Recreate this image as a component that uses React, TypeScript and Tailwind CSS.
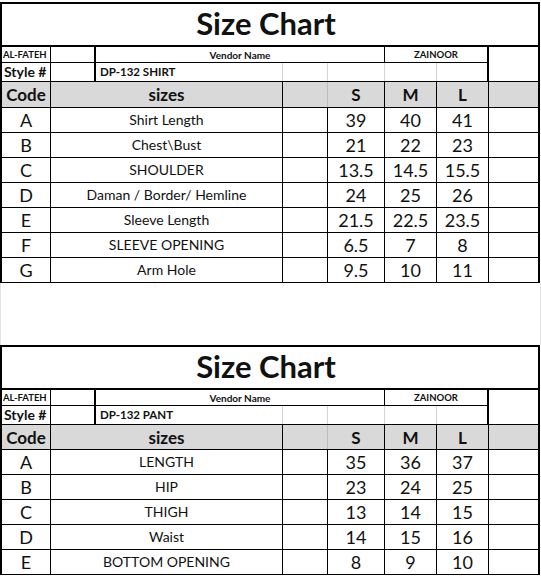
import React from "react";

type Row = { code: string; label: string; s: string; m: string; l: string };

const shirt: Row[] = [
  { code: "A", label: "Shirt Length", s: "39", m: "40", l: "41" },
  { code: "B", label: "Chest\\Bust", s: "21", m: "22", l: "23" },
  { code: "C", label: "SHOULDER", s: "13.5", m: "14.5", l: "15.5" },
  { code: "D", label: "Daman / Border/ Hemline", s: "24", m: "25", l: "26" },
  { code: "E", label: "Sleeve Length", s: "21.5", m: "22.5", l: "23.5" },
  { code: "F", label: "SLEEVE OPENING", s: "6.5", m: "7", l: "8" },
  { code: "G", label: "Arm Hole", s: "9.5", m: "10", l: "11" },
];

const pant: Row[] = [
  { code: "A", label: "LENGTH", s: "35", m: "36", l: "37" },
  { code: "B", label: "HIP", s: "23", m: "24", l: "25" },
  { code: "C", label: "THIGH", s: "13", m: "14", l: "15" },
  { code: "D", label: "Waist", s: "14", m: "15", l: "16" },
  { code: "E", label: "BOTTOM OPENING", s: "8", m: "9", l: "10" },
];

function Chart({ styleName, rows, headerTall }: { styleName: string; rows: Row[]; headerTall: boolean }) {
  return (
    <div className="w-[540px] border-x-2 border-black text-[#111]">
      <div className="h-[45px] border-y-2 border-black flex items-center justify-center text-[31px] font-bold leading-none pb-[2px] pr-[8px]">
        Size Chart
      </div>
      <div className="flex border-b border-black">
        <div className="flex flex-col">
          <div className="flex h-[16px] border-b border-black">
            <div className="w-[49px] border-r border-black flex items-center pl-[1px] text-[9.5px] font-bold leading-none">
              AL-FATEH
            </div>
            <div className="w-[45px] border-r-2 border-black" />
            <div className="w-[289px] border-r border-black flex items-center justify-center text-[10px] font-bold leading-none">
              Vendor Name
            </div>
            <div className="w-[104px] border-r-2 border-black flex items-center justify-center text-[9.5px] font-bold leading-none">
              ZAINOOR
            </div>
          </div>
          <div className="flex h-[18px]">
            <div className="w-[49px] border-r border-black flex items-center pl-[2px] text-[14px] font-bold leading-none">
              Style #
            </div>
            <div className="w-[45px] border-r-2 border-black" />
            <div className="w-[187px] border-r border-[#d4d4d4] flex items-center pl-[4px] text-[11.5px] font-bold leading-none whitespace-nowrap">
              {styleName}
            </div>
            <div className="w-[45px] border-r border-[#d4d4d4]" />
            <div className="w-[57px] border-r border-[#d4d4d4]" />
            <div className="w-[52px] border-r border-[#d4d4d4]" />
            <div className="w-[52px] border-r-2 border-black" />
          </div>
        </div>
        <div className="w-[49px]" />
      </div>
      <div className={`flex ${headerTall ? "h-[26px]" : "h-[25px]"} bg-[#d9d9d9] border-b border-black font-bold leading-none`}>
        <div className="w-[49px] border-r border-black flex items-center justify-center text-[17px]">Code</div>
        <div className="w-[232px] border-r border-black flex items-center justify-center text-[17px]">sizes</div>
        <div className="w-[45px] border-r border-[#bdbdbd]" />
        <div className="w-[57px] border-r border-black flex items-center justify-center text-[17px]">S</div>
        <div className="w-[52px] border-r border-black flex items-center justify-center text-[17px]">M</div>
        <div className="w-[52px] border-r border-black flex items-center justify-center text-[17px]">L</div>
        <div className="w-[49px]" />
      </div>
      {rows.map((r) => (
        <div key={r.code} className="flex h-[25px] border-b border-black leading-none">
          <div className="w-[49px] border-r border-black flex items-center justify-center text-[18px]">{r.code}</div>
          <div className="w-[232px] border-r border-black flex items-center justify-center text-[14px] whitespace-nowrap">
            {r.label}
          </div>
          <div className="w-[45px] border-r border-black" />
          <div className="w-[57px] border-r border-black flex items-center justify-center text-[18px]">{r.s}</div>
          <div className="w-[52px] border-r border-black flex items-center justify-center text-[18px]">{r.m}</div>
          <div className="w-[52px] border-r border-black flex items-center justify-center text-[18px]">{r.l}</div>
          <div className="w-[49px]" />
        </div>
      ))}
    </div>
  );
}

export default function App() {
  return (
    <div className="w-[541px] h-[578px] bg-white overflow-hidden" style={{ fontFamily: "Lato, 'Noto Sans', sans-serif" }}>
      <div className="h-[2px]" />
      <Chart styleName="DP-132 SHIRT" rows={shirt} headerTall={true} />
      <div className="h-[62px] w-[541px] border-l border-r border-[#e3e3e3]" />
      <Chart styleName="DP-132 PANT" rows={pant} headerTall={false} />
    </div>
  );
}
